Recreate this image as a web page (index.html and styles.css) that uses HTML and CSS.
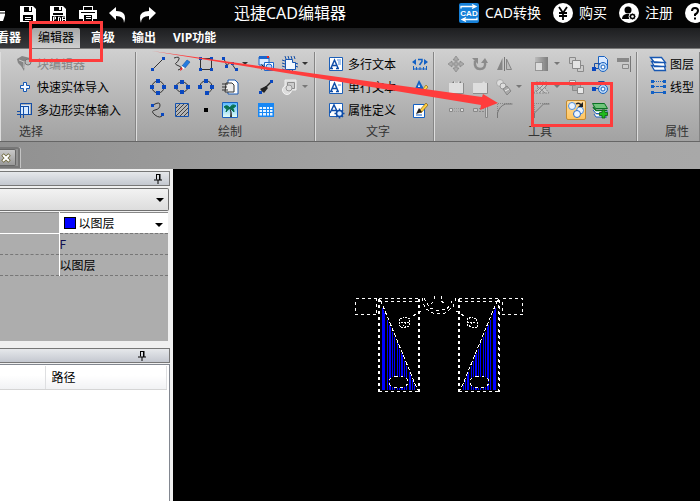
FILE: index.html
```html
<!DOCTYPE html>
<html lang="zh-Hans">
<head>
  <meta charset="UTF-8">
  <title>迅捷CAD编辑器</title>
  <meta name="viewport" content="width=device-width, initial-scale=1.0">
  <link rel="stylesheet" href="styles.css">
</head>
<body>
  <!-- icon set -->
  <svg class="defs" aria-hidden="true">
    <defs>
      <linearGradient id="teal" x1="0" y1="0" x2="0" y2="1"><stop offset="0" stop-color="#58b8ff"/><stop offset="1" stop-color="#e6fff4"/></linearGradient>
      <linearGradient id="fade"><stop offset="0" stop-color="#bbb"/><stop offset="1" stop-color="#7d7d7d"/></linearGradient>
    </defs>
    <symbol id="i-block" viewBox="0 0 18 18"><path d="M1 4l5-3 8 2-2 5-3 1-1 7-3-5-3-3z" fill="#858585"/><path d="M3 5l5 2v6M8 7l5-2" stroke="#ccc" fill="none"/><circle cx="12" cy="7" r="3" fill="#bbb" stroke="#777"/></symbol>
    <symbol id="i-plus" viewBox="0 0 18 18"><path d="M7.500 4.500h3v3h3v3h-3v3h-3v-3h-3v-3h3z" fill="#f2f7ff" stroke="#1458b4"/></symbol>
    <symbol id="i-poly" viewBox="0 0 18 18"><path d="M5 4h9v9H5z" fill="#d9ebff"/><path d="M4.500 17V2.500H16M7.500 17V5M1 13.500h15M1 10.500h4M5 5.500h8M12.500 5v8M15.500 2v12" fill="none" stroke="#124ea8"/></symbol>
    <symbol id="i-line" viewBox="0 0 18 18"><path d="M4 14L14 4" stroke="#333"/><path d="M2 13h3v3H2zM13 2h3v3h-3z" fill="#0a48c0"/></symbol>
    <symbol id="i-pencil" viewBox="0 0 18 18"><path d="M1 3q6-2 5 1t-3 4 3 3-1 4" fill="none" stroke="#333"/><path d="M9 11l5-6 3 2-5 6z" fill="#257be0" stroke="#1452a6" stroke-width=".6"/><path d="M9 11l3 2-3 2z" fill="#fff"/><path d="M8 12l2 2-3 2z" fill="#e22"/></symbol>
    <symbol id="i-rect" viewBox="0 0 18 18"><path d="M3.500 3.500h11v11h-11z" fill="none" stroke="#333"/><path d="M2 2h3v3H2zM13 2h3v3h-3zM2 13h3v3H2zM13 13h3v3h-3z" fill="#0a48c0"/></symbol>
    <symbol id="i-spline" viewBox="0 0 18 18"><path d="M3 4l3 7q2-5 5-2l4 6" fill="none" stroke="#333"/><path d="M1 2h3v3H1zM4 10h3v3H4zM10 7h3v3h-3zM14 13h3v3h-3z" fill="#0a48c0"/></symbol>
    <symbol id="i-circle" viewBox="0 0 18 18"><circle cx="9" cy="9" r="6" fill="none" stroke="#333"/><path d="M7 1h4v4H7zM7 13h4v4H7zM1 7h4v4H1zM13 7h4v4h-4z" fill="#0a48c0"/></symbol>
    <symbol id="i-ellipse" viewBox="0 0 18 18"><ellipse cx="9" cy="9" rx="6" ry="5" fill="none" stroke="#333"/><path d="M7 2h4v4H7zM7 12h4v4H7zM1 7h4v4H1zM13 7h4v4h-4z" fill="#0a48c0"/></symbol>
    <symbol id="i-arc" viewBox="0 0 18 18"><path d="M3 8q1-5 6-5t6 5-5 7" fill="none" stroke="#333"/><path d="M1 7h4v4H1zM7 1h4v4H7zM13 7h4v4h-4zM8 13h4v4H8z" fill="#0a48c0"/></symbol>
    <symbol id="i-scurve" viewBox="0 0 18 18"><path d="M4 4q7-4 7 0T6 9t0 5 8 0" fill="none" stroke="#333"/><path d="M2 3h3v3H2zM12 12h3v3h-3z" fill="#0a48c0"/></symbol>
    <symbol id="i-hatch" viewBox="0 0 18 18"><path d="M2.500 2.500h13v13h-13z" fill="#b5b5b5" stroke="#1452b0"/><path d="M3 7l4-4M3 11l8-8M3 15L15 3M7 15l8-8M11 15l4-4" stroke="#444"/></symbol>
    <symbol id="i-dot" viewBox="0 0 18 18"><path d="M7 7h4v4H7z" fill="#000"/></symbol>
    <symbol id="i-import" viewBox="0 0 18 18"><path d="M7 2h7l3 3v11H7z" fill="#fff" stroke="#1756b2"/><path d="M5 5h6l2 2v7H4z" fill="#eee" stroke="#333"/><path d="M1 6h6M1 9h5M1 12h6" stroke="#333"/></symbol>
    <symbol id="i-palm" viewBox="0 0 18 18"><path d="M1.500 1.500h15v15h-15z" fill="url(#teal)" stroke="#1a62c0"/><path d="M8 7q2 3 1 9h2q0-6-2-9z" fill="#333"/><path d="M9 7Q6 3 3 6q2 0 2 2 2-2 4-1M9 7q2-5 6-2-2 0-2 2-2-1-4 0M9 7q4-1 4 4-2-2-4-4M9 7q-4 0-4 4 2-3 4-4" fill="#08704e" stroke="#08704e"/></symbol>
    <symbol id="i-insert" viewBox="0 0 18 18"><path d="M2 2h10v8H2z" fill="#d8eaff" stroke="#1c66cc"/><path d="M2 1h10v3H2z" fill="#1c66cc"/><path d="M10 1h2v2h-2z" fill="#e22"/><path d="M7.500 7.500h9v8h-9z" fill="#fff" stroke="#1c66cc"/><circle cx="12" cy="12" r="3" fill="#b8d8ff" stroke="#1c66cc"/><path d="M2 12h5M4.500 9.500L7 12l-2.500 2.500" fill="none" stroke="#222"/></symbol>
    <symbol id="i-brush" viewBox="0 0 18 18"><path d="M4 14L14 4" stroke="#222" stroke-width="1.500"/><path d="M3 11l6-3 2 2-4 5z" fill="#222"/><path d="M2 13h3v3H2zM13 2h3v3h-3z" fill="#0a48c0"/></symbol>
    <symbol id="i-table" viewBox="0 0 18 18"><path d="M1 2h16v14H1z" fill="#1787f5"/><path d="M2.500 6h2.500v2H2.500zM6 6h3v2H6zM10 6h2v2h-2zM13 6h2.500v2H13zM2.500 9h2.500v2H2.500zM6 9h3v2H6zM10 9h2v2h-2zM13 9h2.500v2H13zM2.500 12h2.500v2.500H2.500zM6 12h3v2.500H6zM10 12h2v2.500h-2zM13 12h2.500v2.500H13z" fill="#e8f4ff"/></symbol>
    <symbol id="i-region" viewBox="0 0 18 18"><path d="M4 1l1 3M7 1l1 3M10 1l1 3M13 1l1 3M1 5l3 1M1 8l3 1M1 11l3 1M1 14l3 1M5 14l1 3M8 14l1 3M11 14l1 3M14 8l3 1M14 11l3 1" stroke="#124ea8"/><path d="M4.500 4.500h7v3h3v7h-10z" fill="#f2f8ff" stroke="#1756b2"/></symbol>
    <symbol id="i-shapes" viewBox="0 0 18 18"><path d="M4 2h11v10H4z" fill="#ddd" stroke="#eee"/><path d="M6.500 4.500h7v6h-7z" fill="#ccc" stroke="#8d8d8d"/><circle cx="6" cy="12" r="4.500" fill="#ddd" stroke="#f4f4f4"/><circle cx="8" cy="10" r="3" fill="#ddd" stroke="#999"/></symbol>
    <symbol id="i-mtext" viewBox="0 0 18 18"><path d="M2.500 2.500h13v13h-13z" fill="#fff" stroke="#1c5fb8"/><path d="M4 13L7.500 5 11 13M5.500 10.500h4M3 13.500h3M9 13.500h3" stroke="#0f4da8" fill="none" stroke-width="1.500"/><path d="M10 5h4M11 7h3M11 9h3" stroke="#4d8bdc"/></symbol>
    <symbol id="i-stext" viewBox="0 0 18 18"><path d="M2.500 2.500h13v13h-13z" fill="#fff" stroke="#1c5fb8"/><path d="M4 13L7.500 5 11 13M5.500 10.500h4M3 13.500h3M9 13.500h3" stroke="#0f4da8" fill="none" stroke-width="1.500"/><path d="M11 7h3" stroke="#4d8bdc"/></symbol>
    <symbol id="i-attr" viewBox="0 0 18 18"><path d="M2.500 2.500h13v13h-13z" fill="#fff" stroke="#1c5fb8"/><path d="M3 12L7 4l4 8M5 9.500h4" stroke="#0f4da8" fill="none" stroke-width="1.500"/><circle cx="12.500" cy="12.500" r="3" fill="#dcecff" stroke="#0f4da8" stroke-width="1.500"/><path d="M12.500 7.500v2M12.500 15.500v2M7.500 12.500h2M15.500 12.500h2M9 9l1.500 1.500M14.500 14.500L16 16M16 9l-1.500 1.500M10.500 14.500L9 16" stroke="#0f4da8" stroke-width="1.500"/></symbol>
    <symbol id="i-ask" viewBox="0 0 18 18"><path d="M5 4v6L1 7zM13 4v6l4-3z" fill="#1260c4"/><path d="M7 4.500h4v2L8.500 10" fill="none" stroke="#1260c4" stroke-width="1.500"/><path d="M2.500 11v4M15.500 11v4M5.500 12v3M9 12v3M12.500 12v3M2 14h14" stroke="#1260c4"/></symbol>
    <symbol id="i-style" viewBox="0 0 18 18"><path d="M3 13L8 2l5 9z" fill="#1260c4"/><path d="M7 9l1-3 1 3z" fill="#fff"/><path d="M2 13.500h7" stroke="#1260c4" stroke-width="2"/><path d="M9 15l6-8 2 2-6 7z" fill="#ffd84e" stroke="#9a7424" stroke-width=".8"/></symbol>
    <symbol id="i-edit" viewBox="0 0 18 18"><path d="M2.500 3.500h11v13h-11z" fill="#fff" stroke="#1260c4"/><path d="M5 14h6" stroke="#1260c4"/><path d="M8 10l7-8 2 2-7 8z" fill="#ffcf3f" stroke="#8a6a28" stroke-width=".8"/><path d="M5 13l3-6 3 4z" fill="#222"/></symbol>
    <symbol id="i-move" viewBox="0 0 18 18"><path d="M9 1l3 4h-2v3h3V6l4 3-4 3v-2h-3v3h2l-3 4-3-4h2v-3H5v2L1 9l4-3v2h3V5H6z" fill="#aaa" stroke="#7d7d7d" stroke-width=".6"/></symbol>
    <symbol id="i-rotate" viewBox="0 0 18 18"><path d="M4 6q-1 8 5 8t5-7" fill="none" stroke="#8c8c8c" stroke-width="2.500"/><path d="M1 3l6 0v6zM10 8l4-5 3 5z" fill="#8c8c8c"/></symbol>
    <symbol id="i-mirror" viewBox="0 0 18 18"><path d="M9.500 2v14" stroke="#777"/><path d="M7.500 3v12H2z" fill="#858585"/><path d="M11.500 4v10.500h5z" fill="#bbb" stroke="#858585"/></symbol>
    <symbol id="i-folder1" viewBox="0 0 18 18"><path d="M2 5h4l2-2v2h3V3l2 2h3v10H2z" fill="#dedede"/><path d="M2 15.500h14.500V5" fill="none" stroke="#8c8c8c"/><path d="M5 5l2-2v2zM12 5l2-2v2z" fill="#777"/></symbol>
    <symbol id="i-folder2" viewBox="0 0 18 18"><path d="M2 5h9l2-2 1 2h2v10H2z" fill="#dedede"/><path d="M2 15.500h14.500V5" fill="none" stroke="#8c8c8c"/></symbol>
    <symbol id="i-explode" viewBox="0 0 18 18"><circle cx="5" cy="5" r="3.500" fill="#ddd" stroke="#aaa"/><circle cx="8" cy="8" r="3" fill="#ddd" stroke="#999"/><path d="M8 11l4-3 4 5-4 4z" fill="#aaa" stroke="#888"/><path d="M10 13l4-2" stroke="#eee"/></symbol>
    <symbol id="i-break" viewBox="0 0 18 18"><path d="M2.500 7.500h3v3h-3zM13.500 7.500h3v3h-3z" fill="#ddd" stroke="#888"/><path d="M7 7.500h5M7 10.500h5" stroke="#999" stroke-dasharray="1 1"/></symbol>
    <symbol id="i-extend" viewBox="0 0 18 18"><path d="M2.500 7.500h4v3h-4zM14.500 3.500h2v13h-2z" fill="#ccc" stroke="#888"/><path d="M8 7.500h6M8 10.500h6" stroke="#888" stroke-dasharray="2 1"/></symbol>
    <symbol id="i-fillet" viewBox="0 0 18 18"><path d="M2.500 16V2.500H16" fill="none" stroke="#888" stroke-dasharray="1 1"/><path d="M2.500 17v-5q2-7 8-9h7" fill="none" stroke="#777"/></symbol>
    <symbol id="i-chamfer" viewBox="0 0 18 18"><path d="M1.500 17V2.500H16" fill="none" stroke="#888" stroke-dasharray="1 1"/><path d="M1.500 17v-5l9-9h6" fill="none" stroke="#777"/></symbol>
    <symbol id="i-scale" viewBox="0 0 18 18"><path d="M2 2h13v14H2z" fill="url(#fade)"/><path d="M2.500 7.500h7v8h-7z" fill="#ddd" stroke="#666" stroke-dasharray="1 1"/></symbol>
    <symbol id="i-edithatch" viewBox="0 0 18 18"><path d="M3 4h12l-3 6 4 5H1l4-5z" fill="#c9c9c9" stroke="#888" stroke-dasharray="2 1"/><path d="M3 14L13 4M6 15l8-8M4 8l8 7" stroke="#888"/></symbol>
    <symbol id="i-front" viewBox="0 0 18 18"><path d="M2.500 2.500h6v6h-6zM10.500 10.500h6v6h-6z" fill="#ccc" stroke="#8a8a8a"/><path d="M5.500 5.500h8v8h-8z" fill="#e4e4e4" stroke="#8a8a8a"/></symbol>
    <symbol id="i-back" viewBox="0 0 18 18"><path d="M5.500 5.500h8v7h-8z" fill="#aaa" stroke="#8a8a8a"/><path d="M2.500 2.500h6v5h-6zM10.500 9.500h6v6h-6z" fill="#e8e8e8" stroke="#8a8a8a"/></symbol>
    <symbol id="i-match" viewBox="0 0 18 18"><path d="M7.500 1.500h6l3 3v9h-9z" fill="#d8e8ff" stroke="#1a62c0"/><path d="M3.500 13.500V8.500h6M3 13.500h6" fill="none" stroke="#1a4da0"/><path d="M1 12h4v4H1z" fill="#0a48c0"/><circle cx="12" cy="12" r="4.500" fill="#bcd9f8" stroke="#1a62c0"/><circle cx="12" cy="12" r="2" fill="#fff" stroke="#1a62c0"/></symbol>
    <symbol id="i-match2" viewBox="0 0 18 18"><path d="M2 10.500h6M7.500 7V3.500h6" fill="none" stroke="#1a4da0"/><path d="M1 9h4v4H1z" fill="#0a48c0"/><circle cx="12" cy="11" r="4.500" fill="#bcd9f8" stroke="#1a62c0"/><circle cx="12" cy="11" r="2" fill="#fff" stroke="#1a62c0"/></symbol>
    <symbol id="i-align" viewBox="0 0 18 18"><path d="M15.500 1v16" stroke="#777"/><path d="M2 3h12v4H2z" fill="#888"/><path d="M7.500 9.500h6v4h-6z" fill="#ccc" stroke="#888"/></symbol>
    <symbol id="i-copy" viewBox="0 0 18 18"><circle cx="5" cy="5" r="3.500" fill="#eaf4ff" stroke="#4c8fe0"/><circle cx="13" cy="9.500" r="3.500" fill="#eaf4ff" stroke="#4c8fe0"/><circle cx="10" cy="13" r="3.500" fill="#eaf4ff" stroke="#2b6cc8"/><path d="M9 3q3-2 5 1" fill="none" stroke="#222" stroke-width="1.500"/><path d="M16 1v5h-5z" fill="#222"/></symbol>
    <symbol id="i-addlayer" viewBox="0 0 18 18"><path d="M3 13l2 3h11M2 9l3 3.500h11V9" fill="#fff" stroke="#1a62c0"/><path d="M1.500 2.500l3 5h12l-3-5z" fill="#6fc47a" stroke="#0a7224"/><path d="M2 6l3 3.500h11" fill="none" stroke="#0a7224" stroke-width="1.500"/><path d="M8.500 11.500h2.500V9h3v2.500h2.500v3H14V17h-3v-2.500H8.500z" fill="#20ba20" stroke="#075e12" stroke-width=".8"/></symbol>
    <symbol id="i-layers" viewBox="0 0 18 18"><path d="M2.500 10.500l3 5h11l-1-4zM2.500 6.500l3 5h11l-1-4zM1.500 2.500l4 5h11l-4-5z" fill="#fff" stroke="#1757b2" stroke-width="1.300"/></symbol>
    <symbol id="i-linetype" viewBox="0 0 18 18"><path d="M3 3.500h12" stroke="#1260c4" stroke-dasharray="1 1"/><path d="M3 8.500h12" stroke="#1260c4" stroke-dasharray="3 1"/><path d="M3 14.500h12" stroke="#1260c4"/><path d="M2 2h3v3H2zM14 2h3v3h-3zM2 7h3v3H2zM14 7h3v3h-3zM2 13h3v3H2zM14 13h3v3h-3z" fill="#1260c4"/></symbol>
    <symbol id="i-pin" viewBox="0 0 10 10"><path d="M3.500.5v5M3 .5h4M1 6h8M5 6v4" fill="none" stroke="#000"/><path d="M6 0h1.500v6H6z"/></symbol>
  </svg>

  <header class="titlebar">
    <div class="quick">
      <button aria-label="打开"><svg width="18" height="20" viewBox="0 0 18 20"><path d="M2 6h6l1 2h7v4l-2 6H2z" fill="#fff"/><path d="M4 10h12" stroke="#000"/></svg></button>
      <button aria-label="保存"><svg width="18" height="20" viewBox="0 0 18 20"><path d="M1 3h13l3 3v13H1z" fill="#fff"/><path d="M5 4h8v5H5zM4 12h10v6H4z" fill="#000"/><path d="M10 4h2v4h-2zM6 14h6v1H6zM6 16h6v1H6z" fill="#fff"/></svg></button>
      <button aria-label="输出PDF"><svg width="18" height="20" viewBox="0 0 18 20"><path d="M1 3h13l3 3v13H1z" fill="#fff"/><path d="M5 4h8v4H5zM4 10h10v2H4zM3 13h13v6H3z" fill="#000"/><path d="M10 4h2v3h-2z" fill="#fff"/><path d="M4.500 19v-5h2v2h-2M9.500 14v5h1l1-1v-3l-1-1zM13.500 19v-5H16M14 16.500h2" fill="none" stroke="#fff"/></svg></button>
      <button aria-label="打印"><svg width="20" height="20" viewBox="0 0 20 20"><path d="M5 3h10v4h4v9h-4v3H5v-3H1V7h4z" fill="#fff"/><path d="M6 4h8v3H6zM3 9h14v1H3zM6 12h8v6H6z" fill="#000"/><path d="M8 13h5v1H8zM8 15h5v1H8z" fill="#fff"/></svg></button>
      <button aria-label="撤销"><svg width="20" height="20" viewBox="0 0 20 20"><path d="M1 10l7-6v4q12 0 8 12 0-7-8-7v4z" fill="#fff"/></svg></button>
      <button aria-label="重做"><svg width="20" height="20" viewBox="0 0 20 20"><path d="M18 10l-7-6v4Q-1 8 3 20q0-7 8-7v4z" fill="#fff"/></svg></button>
    </div>
    <h1>迅捷CAD编辑器</h1>
    <nav class="account">
      <a href="#"><svg width="20" height="20" viewBox="0 0 20 20"><rect width="20" height="20" rx="2" fill="#1680d8"/><path d="M2 5.500V3.500h14M13 1.500l4 2-4 2M18 14.500v2H4M7 14.500l-4 2 4 2" fill="none" stroke="#fff" stroke-width="1.300"/><text x="10" y="13" class="cadmark">CAD</text></svg><span>CAD转换</span></a>
      <a href="#"><svg width="20" height="20" viewBox="0 0 20 20"><circle cx="10" cy="10" r="10" fill="#fff"/><path d="M6 4l4 6 4-6M10 10v7M6 10h8M6 13h8" fill="none" stroke="#000" stroke-width="1.800"/></svg><span>购买</span></a>
      <a href="#"><svg width="20" height="20" viewBox="0 0 20 20"><circle cx="10" cy="10" r="10" fill="#fff"/><circle cx="9" cy="7" r="3.500"/><path d="M3 16q0-4 4-5h4v5z"/><circle cx="13.500" cy="13.500" r="3.500" fill="#000" stroke="#fff"/><circle cx="13.500" cy="13.500" r="1.300" fill="#fff"/></svg><span>注册</span></a>
      <a href="#" aria-label="帮助"><svg width="20" height="20" viewBox="0 0 20 20"><circle cx="10" cy="10" r="10" fill="#fff"/><path d="M7 8q0-3 3-3t3 2.500-3 4V13M10 14.500v2" fill="none" stroke="#000" stroke-width="2"/></svg></a>
    </nav>
  </header>

  <nav class="tabs">
    <button>查看器</button>
    <button class="active">编辑器</button>
    <button>高级</button>
    <button>输出</button>
    <button>VIP功能</button>
  </nav>

  <div class="ribbon">
    <section class="group select-group">
      <div class="tools">
        <button class="tool off"><svg><use href="#i-block"/></svg>块编辑器</button>
        <button class="tool"><svg><use href="#i-plus"/></svg>快速实体导入</button>
        <button class="tool"><svg><use href="#i-poly"/></svg>多边形实体输入</button>
      </div>
      <h2>选择</h2>
    </section>

    <section class="group draw-group">
      <div class="tools">
        <button class="tool" aria-label="直线"><svg><use href="#i-line"/></svg></button>
        <button class="tool" aria-label="徒手画"><svg><use href="#i-pencil"/></svg></button>
        <button class="tool" aria-label="矩形"><svg><use href="#i-rect"/></svg></button>
        <button class="tool drop" aria-label="多段线"><svg><use href="#i-spline"/></svg></button>
        <button class="tool" aria-label="插入块"><svg><use href="#i-insert"/></svg></button>
        <button class="tool drop" aria-label="面域"><svg><use href="#i-region"/></svg></button>
        <button class="tool" aria-label="圆"><svg><use href="#i-circle"/></svg></button>
        <button class="tool" aria-label="椭圆"><svg><use href="#i-ellipse"/></svg></button>
        <button class="tool" aria-label="圆弧"><svg><use href="#i-arc"/></svg></button>
        <button class="tool" aria-label="导入"><svg><use href="#i-import"/></svg></button>
        <button class="tool" aria-label="笔刷"><svg><use href="#i-brush"/></svg></button>
        <button class="tool drop off" aria-label="图形"><svg><use href="#i-shapes"/></svg></button>
        <button class="tool" aria-label="样条"><svg><use href="#i-scurve"/></svg></button>
        <button class="tool" aria-label="填充"><svg><use href="#i-hatch"/></svg></button>
        <button class="tool" aria-label="点"><svg><use href="#i-dot"/></svg></button>
        <button class="tool" aria-label="图片"><svg><use href="#i-palm"/></svg></button>
        <button class="tool" aria-label="表格"><svg><use href="#i-table"/></svg></button>
      </div>
      <h2>绘制</h2>
    </section>

    <section class="group text-group">
      <div class="tools">
        <button class="tool"><svg><use href="#i-mtext"/></svg>多行文本</button>
        <button class="tool" aria-label="查找文字"><svg><use href="#i-ask"/></svg></button>
        <button class="tool"><svg><use href="#i-stext"/></svg>单行文本</button>
        <button class="tool" aria-label="文字样式"><svg><use href="#i-style"/></svg></button>
        <button class="tool"><svg><use href="#i-attr"/></svg>属性定义</button>
        <button class="tool" aria-label="编辑文字"><svg><use href="#i-edit"/></svg></button>
      </div>
      <h2>文字</h2>
    </section>

    <section class="group edit-group">
      <div class="tools">
        <button class="tool off" aria-label="移动"><svg><use href="#i-move"/></svg></button>
        <button class="tool off" aria-label="旋转"><svg><use href="#i-rotate"/></svg></button>
        <button class="tool off" aria-label="镜像"><svg><use href="#i-mirror"/></svg></button>
        <button class="tool drop off" aria-label="缩放"><svg><use href="#i-scale"/></svg></button>
        <button class="tool off" aria-label="前置"><svg><use href="#i-front"/></svg></button>
        <button class="tool" aria-label="特性匹配"><svg><use href="#i-match"/></svg></button>
        <button class="tool off" aria-label="对齐"><svg><use href="#i-align"/></svg></button>
        <button class="tool off" aria-label="组合"><svg><use href="#i-folder1"/></svg></button>
        <button class="tool off" aria-label="取消组合"><svg><use href="#i-folder2"/></svg></button>
        <button class="tool drop off" aria-label="分解"><svg><use href="#i-explode"/></svg></button>
        <button class="tool drop off" aria-label="编辑填充"><svg><use href="#i-edithatch"/></svg></button>
        <button class="tool off" aria-label="后置"><svg><use href="#i-back"/></svg></button>
        <button class="tool" aria-label="匹配"><svg><use href="#i-match2"/></svg></button>
        <span></span>
        <button class="tool off" aria-label="打断"><svg><use href="#i-break"/></svg></button>
        <button class="tool off" aria-label="延伸"><svg><use href="#i-extend"/></svg></button>
        <button class="tool off" aria-label="圆角"><svg><use href="#i-fillet"/></svg></button>
        <button class="tool off" aria-label="倒角"><svg><use href="#i-chamfer"/></svg></button>
        <button class="tool on" aria-label="复制"><svg><use href="#i-copy"/></svg></button>
        <button class="tool" aria-label="添加图层"><svg><use href="#i-addlayer"/></svg></button>
      </div>
      <h2>工具</h2>
    </section>

    <section class="group prop-group">
      <div class="tools">
        <button class="tool"><svg><use href="#i-layers"/></svg>图层</button>
        <button class="tool"><svg><use href="#i-linetype"/></svg>线型</button>
      </div>
      <h2>属性</h2>
    </section>
  </div>

  <div class="doctabs">
    <div class="doctab"><button aria-label="关闭"><svg width="10" height="10" viewBox="0 0 10 10"><path d="M1.500 1.500l7 7M8.500 1.500l-7 7" stroke="#6a6232" stroke-width="3.500"/><path d="M2 2l6 6M8 2L2 8" stroke="#fff" stroke-width="2"/></svg></button></div>
  </div>

  <main class="workspace">
    <aside class="side">
      <section class="props">
        <div class="bar"><button aria-label="固定"><svg width="10" height="10"><use href="#i-pin"/></svg></button></div>
        <div class="pick object"><select aria-label="对象"><option></option></select></div>
        <table>
          <tr>
            <th></th>
            <td><div class="pick color"><i class="swatch"></i><select aria-label="颜色"><option>以图层</option></select></div></td>
          </tr>
          <tr><th></th><td class="layer">F</td></tr>
          <tr><th></th><td>以图层</td></tr>
        </table>
      </section>
      <section class="paths">
        <div class="bar"><button aria-label="固定"><svg width="10" height="10"><use href="#i-pin"/></svg></button></div>
        <div class="list">
          <table>
            <tr><th></th><th>路径</th></tr>
          </table>
        </div>
      </section>
    </aside>

    <div class="canvas">
      <svg class="drawing" viewBox="340 280 200 125" shape-rendering="crispEdges">
        <g id="fill" fill="none" stroke="#00f">
          <path d="M382.500 308v82M384.500 313v77M387.500 320v70M389.500 325v65M392.500 332v58M394.500 337v53M397.500 343v47M399.500 349v41M402.500 355v35M404.500 361v29M406.500 366v24M409.500 372v18M412.500 380v10M414.500 385v5"/>
          <path d="M383.500 310v80M390.500 327v63M401.500 353v37M410.500 375v15"/>
        </g>
        <use href="#fill" transform="translate(878 0) scale(-1 1)"/>
        <g fill="none" stroke="#fff" stroke-dasharray="3 3">
          <path d="M376.500 298.500h-21v16h21zM502.500 298.500h20v16h-20z"/>
          <path d="M379 298.500h40M379 391.500h40M459 298.500h40M459 391.500h40M379 301.500h40M459 301.500h40"/>
          <path stroke-width="2" d="M379 299v93M419 299v93M459 299v93"/>
          <path d="M498.500 299v93M499.500 300v92"/>
          <path stroke-dasharray="4 2" d="M380.500 300l37 90M497.500 300l-37 90"/>
          <rect x="389.500" y="376.500" width="18" height="11" rx="5" fill="#000"/>
          <rect x="470.500" y="376.500" width="18" height="11" rx="5" fill="#000"/>
          <path d="M422 298l3 10 8 5h12l8-6 3-9M424 298l6 10 8 3 9-2 7-11M431 304l3-3M441 301l4 3"/>
          <path stroke-dasharray="none" d="M434.500 296v3M441.500 296v3"/>
          <path d="M413 316l9-6M464 316l-9-6"/>
          <path stroke-dasharray="2 1" d="M400 319l4-2 6 2-1 7-7 2-3-3zM401 322l8 1M403 326l4-5M476 319l-4-2-5 2 1 7 8 2 2-3zM467 322l9 1M469 326l4-5"/>
        </g>
      </svg>
    </div>
  </main>

  <!-- guide marks -->
  <svg class="marks" width="620" height="130" viewBox="0 0 620 130" aria-hidden="true">
    <path d="M30.500 22.500h71v38h-71zM532.500 83.500h79v42h-79z" fill="none" stroke="#ff3c3c" stroke-width="3"/>
    <path d="M152 51l330 46 1-3 15 9-18 7 1-5z" fill="#ff3c3c"/>
  </svg>
</body>
</html>
```
FILE: styles.css
```css
* {
  box-sizing: border-box;
}
body {
  display: flex;
  flex-direction: column;
  height: 100vh;
  margin: 0;
  overflow: hidden;
  background: #f0f0f0;
  color: #000;
  font: 12px/20px "Noto Sans CJK SC", sans-serif;
}
button, select {
  padding: 0;
  border: 0;
  background: none;
  color: inherit;
  font: inherit;
}
h1, h2 {
  margin: 0;
  font-weight: normal;
}
svg {
  display: block;
  flex: none;
}
.defs {
  position: absolute;
  width: 0;
  height: 0;
}

/* title bar */
.titlebar {
  display: flex;
  flex: none;
  height: 28px;
  background: #030303;
  color: #fff;
  font-family: "Noto Sans", "Noto Sans CJK SC", sans-serif;
}
.quick {
  display: flex;
  align-items: center;
  gap: 10px;
  width: 246px;
  height: 26px;
  margin-left: -12px;
}
.quick button {
  width: 20px;
  display: flex;
  justify-content: center;
}
.titlebar h1 {
  font-size: 16px;
  line-height: 26px;
  white-space: nowrap;
}
.account {
  display: flex;
  align-items: center;
  gap: 12px;
  width: 241px;
  height: 26px;
  margin-left: auto;
  font-size: 14px;
  white-space: nowrap;
}
.account a {
  display: flex;
  align-items: center;
  gap: 6px;
  color: #fff;
  text-decoration: none;
}
.cadmark {
  fill: #fff;
  font: bold 8px "Liberation Sans", sans-serif;
  text-anchor: middle;
}

/* menu tabs */
.tabs {
  display: flex;
  flex: none;
  gap: 5px;
  height: 20px;
  margin-left: -20px;
  background: linear-gradient(#1d1e20, #38393c);
  color: #fff;
  font: bold 12px/20px "Open Sans", "Noto Sans CJK SC", sans-serif;
}
.tabs button {
  padding: 0 6px;
}
.tabs button:first-child {
  padding-left: 5px;
}
.tabs button.active {
  border-radius: 2px 2px 0 0;
  background: linear-gradient(#a6a6a6, #d0d0d0);
  color: #000;
  font-weight: normal;
}

/* ribbon */
.ribbon {
  display: flex;
  flex: none;
  padding-top: 3px;
  border-top: 1px solid #777;
  border-bottom: 1px solid #666;
  background: linear-gradient(#d0d0d0, #b8b8b8 50%, #a2a2a2);
}
.group {
  flex: none;
  border-left: 1px solid #ddd;
  border-right: 1px solid #858585;
}
.group h2 {
  color: #333;
  font-size: 12px;
  line-height: 20px;
  text-align: center;
}
.tools {
  display: grid;
  grid-auto-rows: 23px;
  height: 69px;
}
.tool {
  display: flex;
  align-items: center;
  white-space: nowrap;
}
.tool svg {
  width: 18px;
  height: 18px;
  margin: 0 3px;
}
.tool.off {
  color: #858585;
}
.tool.drop::after {
  content: "";
  border: 3px solid transparent;
  border-top-color: #333;
  border-bottom: 0;
}
.tool.drop.off::after {
  border-top-color: #777;
}
.tool.on {
  width: 20px;
  height: 20px;
  align-self: center;
  justify-self: center;
  border: 1px solid #c28a30;
  border-radius: 2px;
  background: linear-gradient(#ffdc9c, #ffc661);
}
.tool.on svg {
  margin: 0;
}
.select-group {
  padding: 0 14px 0 12px;
}
.select-group h2 {
  padding-left: 6px;
  text-align: left;
}
.draw-group {
  padding-left: 9px;
}
.draw-group .tools {
  grid-template-columns: 24px 24px 24px 36px 24px 36px;
}
.text-group {
  padding: 0 1px 0 8px;
}
.text-group .tools {
  grid-template-columns: 84px 24px;
}
.edit-group {
  padding-left: 9px;
}
.edit-group .tools {
  grid-template-columns: 24px 24px 38px 34px 24px 24px 24px;
}
.prop-group {
  flex: 1;
  padding-left: 8px;
}
.prop-group h2 {
  padding-left: 19px;
  text-align: left;
}

/* open documents */
.doctabs {
  flex: none;
  height: 27px;
  padding-top: 5px;
  background: linear-gradient(90deg, #919191, #a2a2a2 50%, #a8a8a8);
}
.doctab {
  display: flex;
  align-items: center;
  width: 20px;
  height: 21px;
  border: 2px solid #777;
  border-left: 0;
  border-radius: 0 3px 0 0;
  box-shadow: 1px 0 #c4c4c4;
}
.doctab button {
  display: flex;
  align-items: center;
  justify-content: center;
  width: 16px;
  height: 17px;
  padding-right: 3px;
  border: 1px solid #666;
  border-left: 0;
  border-radius: 0 2px 2px 0;
  background: linear-gradient(#c9c9c9, #999);
}

/* work area */
.workspace {
  display: flex;
  flex: 1;
  min-height: 0;
}
.side {
  display: flex;
  flex: none;
  flex-direction: column;
  width: 173px;
  padding: 2px 3px 0 0;
}
.bar {
  display: flex;
  align-items: center;
  justify-content: flex-end;
  height: 15px;
  padding-right: 6px;
  border: 1px solid #777;
  border-left: 0;
  background: linear-gradient(#e6e8eb, #c4c8d0);
}
.pick {
  position: relative;
}
.pick::after {
  content: "";
  position: absolute;
  right: 5px;
  top: 10px;
  border: 4px solid transparent;
  border-top-color: #000;
  border-bottom: 0;
  pointer-events: none;
}
.pick select {
  display: block;
  width: 100%;
  appearance: none;
}
.object {
  margin: 2px 1px 0 0;
}
.object select {
  height: 23px;
  border: 1px solid #707070;
  border-left: 0;
  border-radius: 0 2px 2px 0;
  background: linear-gradient(#f2f2f2, #ddd);
}
.props {
  display: flex;
  flex-direction: column;
  height: 177px;
}
.props table {
  width: 168px;
  margin-top: 1px;
  border-collapse: collapse;
  border-top: 1px solid #888;
  background: #adadad;
}
.props table::after {
  content: "";
  display: block;
  height: 65px;
}
.props th {
  width: 59px;
  border-right: 1px solid #fff;
}
.props th, .props td {
  height: 21px;
  padding: 0;
  border-bottom: 1px dashed #777;
  line-height: 20px;
}
.props tr:first-child th {
  border-bottom: 1px solid #fff;
}
.layer {
  color: #101050;
}
.color select {
  height: 20px;
  padding-left: 19px;
  background: #fff;
}
.swatch {
  position: absolute;
  left: 4px;
  top: 4px;
  width: 12px;
  height: 12px;
  border: 1px solid #000;
  background: #00f;
}
.paths {
  display: flex;
  flex: 1;
  flex-direction: column;
}
.paths .bar {
  padding-right: 22px;
}
.list {
  flex: 1;
  margin-top: 1px;
  padding: 1px 2px 0 0;
  border: 1px solid #828790;
  border-width: 1px 1px 0 0;
  background: #fff;
}
.list table {
  width: 100%;
  border-collapse: collapse;
}
.list th {
  height: 23px;
  padding: 0 6px;
  border-right: 1px solid #dedfe1;
  border-bottom: 1px solid #d5d5d5;
  background: linear-gradient(#fff 40%, #f1f2f4);
  font-weight: normal;
  text-align: left;
}
.list th:first-child {
  width: 45px;
}
.canvas {
  position: relative;
  flex: 1;
  background: #000;
}
.drawing {
  position: absolute;
  left: 167px;
  top: 111px;
  width: 200px;
  height: 125px;
}

.marks {
  position: absolute;
  left: 0;
  top: 0;
  pointer-events: none;
}
```
